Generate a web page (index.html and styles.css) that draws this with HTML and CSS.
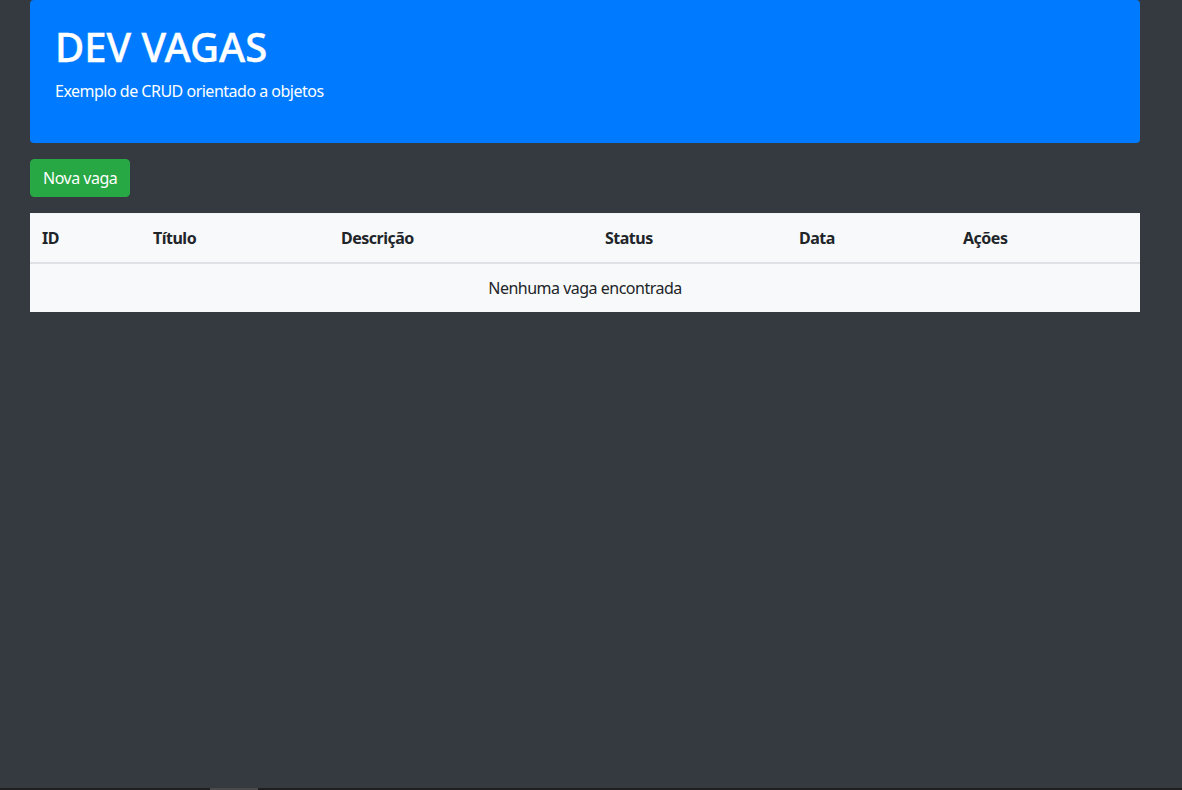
FILE: index.html
```html
<!DOCTYPE html>
<html lang="pt-br">
<head>
<meta charset="utf-8">
<title>Dev Vagas</title>
<link rel="stylesheet" href="styles.css">
</head>
<body>
<div class="container">
  <section class="jumbotron">
    <h1 class="title">DEV VAGAS</h1>
    <p class="subtitle">Exemplo de CRUD orientado a objetos</p>
  </section>

  <section class="actions">
    <a class="btn btn-success">Nova vaga</a>
  </section>

  <section>
    <table class="table">
      <colgroup>
        <col class="c-id">
        <col class="c-titulo">
        <col class="c-desc">
        <col class="c-status">
        <col class="c-data">
        <col class="c-acoes">
      </colgroup>
      <thead>
        <tr>
          <th>ID</th>
          <th>Título</th>
          <th>Descrição</th>
          <th>Status</th>
          <th>Data</th>
          <th>Ações</th>
        </tr>
      </thead>
      <tbody>
        <tr>
          <td colspan="6" class="empty">Nenhuma vaga encontrada</td>
        </tr>
      </tbody>
    </table>
  </section>
</div>
<div class="hscroll"><div class="hscroll-thumb"></div></div>
</body>
</html>
```

FILE: styles.css
```css
* { box-sizing: border-box; }

html, body {
  margin: 0;
  height: 100%;
}

body {
  background: #343a40;
  color: #212529;
  font-family: "Noto Sans", "Open Sans", sans-serif;
  font-size: 16px;
  line-height: 1.5;
  letter-spacing: -0.5px;
}

.container {
  width: 1110px;
  margin-left: 30px;
  display: flex;
  flex-direction: column;
  gap: 16px;
}

.jumbotron {
  background: #007bff;
  color: #fff;
  border-radius: 4px;
  padding: 23px 25px 24px;
}

.title {
  margin: 0 0 8px;
  font-size: 40px;
  font-weight: 500;
  line-height: 1.2;
  letter-spacing: 0;
  -webkit-text-stroke: 0.4px #fff;
}

.subtitle {
  margin: 0 0 16px;
  font-size: 16px;
}

.actions {
  display: flex;
}

.btn {
  display: inline-block;
  padding: 6px 12px;
  font-size: 16px;
  line-height: 24px;
  border: 1px solid transparent;
  border-radius: 4px;
  color: #fff;
  cursor: pointer;
}

.btn-success {
  background: #28a745;
  border-color: #28a745;
}

.table {
  width: 100%;
  border-collapse: separate;
  border-spacing: 0;
  background: #f8f9fa;
  table-layout: fixed;
}

.c-id { width: 111px; }
.c-titulo { width: 188px; }
.c-desc { width: 264px; }
.c-status { width: 194px; }
.c-data { width: 164px; }
.c-acoes { width: 189px; }

.table th,
.table td {
  padding: 12px;
  text-align: left;
  vertical-align: top;
  line-height: 24px;
}

.table th {
  font-weight: 700;
  border-top: 1px solid #f3f4f6;
  border-bottom: 2px solid #dee2e6;
}

.table td.empty {
  text-align: center;
}

.hscroll {
  position: fixed;
  left: 0;
  right: 0;
  bottom: 0;
  height: 2px;
  background: #1f1f1f;
}

.hscroll-thumb {
  margin-left: 210px;
  width: 48px;
  height: 2px;
  background: #4a4a4a;
}
```
